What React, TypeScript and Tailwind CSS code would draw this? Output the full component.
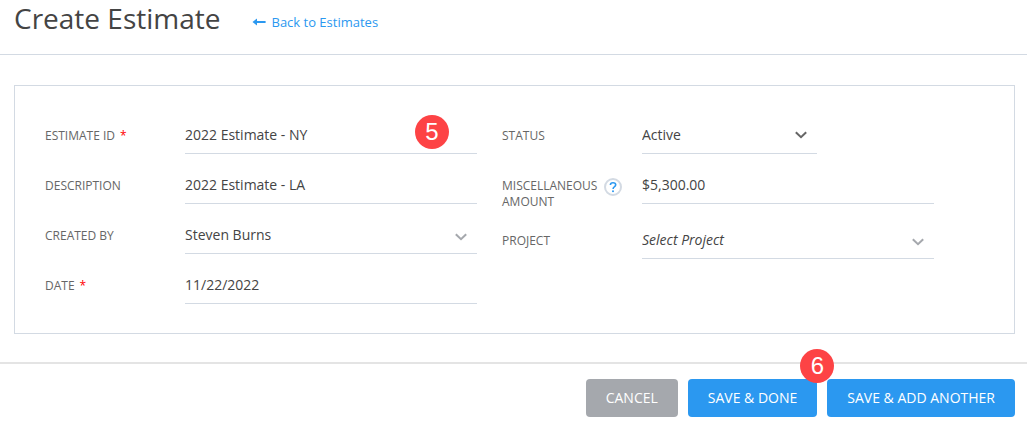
import { useState } from 'react';
import type { ReactNode } from 'react';

type FieldProps = {
  id: string;
  label: string;
  required?: boolean;
  help?: string;
  children: ReactNode;
};

const controlClass =
  'h-[38px] w-full appearance-none rounded-none border-b border-[#d3dae3] bg-transparent text-sm text-[#444] outline-none focus:border-[#2b98f0]';

function Field({ id, label, required, help, children }: FieldProps) {
  return (
    <div className="flex items-start">
      <div className="flex w-[140px] shrink-0 items-start pt-3 text-xs leading-4 text-[#666]">
        <label htmlFor={id} className={help ? 'w-[102px]' : ''}>
          {label}
          {required && <span className="ml-[5px] text-[#f00]">*</span>}
        </label>
        {help && (
          <button type="button" aria-label={help} className="shrink-0">
            <svg className="h-[18px] w-[18px]" viewBox="0 0 18 18" fill="none">
              <circle cx="9" cy="9" r="8" stroke="#d3dae3" strokeWidth="2" />
              <path
                d="M6.4 6.9C6.4 5.5 7.4 4.7 9 4.7s2.7.8 2.7 2.1c0 1-.6 1.5-1.4 2.1-.9.6-1.2.9-1.2 2"
                stroke="#2b98f0"
                strokeWidth="1.6"
              />
              <circle cx="9" cy="13.3" r="1" fill="#2b98f0" />
            </svg>
          </button>
        )}
      </div>
      <div className="min-w-0 flex-1">{children}</div>
    </div>
  );
}

type SelectProps = {
  id: string;
  options: string[];
  chevronClass?: string;
  className?: string;
  wrapperClass?: string;
};

function Select({
  id,
  options,
  chevronClass = 'top-[17px] text-[#a5a8ad]',
  className = '',
  wrapperClass = '',
}: SelectProps) {
  return (
    <div className={`relative ${wrapperClass}`}>
      <select id={id} className={`${controlClass} pr-8 ${className}`}>
        {options.map((option) => (
          <option key={option}>{option}</option>
        ))}
      </select>
      <svg
        className={`pointer-events-none absolute right-[10px] h-2 w-3 ${chevronClass}`}
        viewBox="0 0 12 8"
        fill="none"
        stroke="currentColor"
        strokeWidth="2"
      >
        <path d="M0.8 1.2L6 6.2l5.2-5" />
      </svg>
    </div>
  );
}

function StepBadge({ step, className }: { step: number; className: string }) {
  return (
    <span
      className={`pointer-events-none absolute flex h-[34px] w-[34px] items-center justify-center rounded-full bg-[#fd4345] font-['Liberation_Sans',sans-serif] text-2xl text-white ${className}`}
    >
      {step}
    </span>
  );
}

export default function App() {
  const [values, setValues] = useState({
    estimateId: '2022 Estimate - NY',
    description: '2022 Estimate - LA',
    date: '11/22/2022',
    amount: '$5,300.00',
  });

  const bind = (name: keyof typeof values) => ({
    id: name,
    value: values[name],
    onChange: (e: { target: { value: string } }) => setValues({ ...values, [name]: e.target.value }),
  });

  return (
    <div className="bg-white font-['Open_Sans',sans-serif]">
      <header className="flex items-start gap-8 border-b border-[#d3dae3] px-[14px] pb-[18px]">
        <h1 className="text-[28px] leading-9 text-[#444]">Create Estimate</h1>
        <a href="#estimates" className="flex items-center gap-[5px] pt-3 text-[13px] leading-5 text-[#2b98f0]">
          <svg className="h-2 w-[14px]" viewBox="0 0 14 8" fill="currentColor">
            <path d="M0.5 4L5 0.6v2.5h8.6v1.8H5v2.5z" />
          </svg>
          Back to Estimates
        </a>
      </header>

      <form onSubmit={(e) => e.preventDefault()}>
        <main className="px-3 pt-[30px] pb-7 pl-[14px]">
          <div className="grid grid-cols-2 items-start gap-[25px] border border-[#d3dae3] pt-[30px] pr-20 pb-[29px] pl-[30px]">
            <div className="flex flex-col gap-3">
              <Field id="estimateId" label="ESTIMATE ID" required>
                <div className="relative">
                  <input type="text" className={controlClass} {...bind('estimateId')} />
                  <StepBadge step={5} className="-top-px right-7" />
                </div>
              </Field>
              <Field id="description" label="DESCRIPTION">
                <input type="text" className={controlClass} {...bind('description')} />
              </Field>
              <Field id="createdBy" label="CREATED BY">
                <Select id="createdBy" options={['Steven Burns']} />
              </Field>
              <Field id="date" label="DATE" required>
                <input type="text" className={controlClass} {...bind('date')} />
              </Field>
            </div>

            <div className="flex flex-col gap-[11px]">
              <Field id="status" label="STATUS">
                <Select
                  id="status"
                  options={['Active', 'Inactive']}
                  chevronClass="top-[15px] text-[#666]"
                  wrapperClass="mb-px w-3/5"
                />
              </Field>
              <Field id="amount" label="MISCELLANEOUS AMOUNT" help="About miscellaneous amount">
                <input type="text" className={controlClass} {...bind('amount')} />
              </Field>
              <Field id="project" label="PROJECT">
                <Select id="project" options={['Select Project']} className="italic" />
              </Field>
            </div>
          </div>
        </main>

        <footer className="flex justify-end gap-[10px] border-t-2 border-[#e4e4e4] px-3 pt-[15px] pb-[5px] text-sm text-white">
          <button type="button" className="h-[38px] rounded bg-[#a5a8ad] px-5">
            CANCEL
          </button>
          <div className="relative">
            <button type="submit" className="h-[38px] rounded bg-[#2b98f0] px-5">
              SAVE &amp; DONE
            </button>
            <StepBadge step={6} className="-top-[30px] -right-[17px]" />
          </div>
          <button type="submit" className="h-[38px] rounded bg-[#2b98f0] px-5">
            SAVE &amp; ADD ANOTHER
          </button>
        </footer>
      </form>
    </div>
  );
}
